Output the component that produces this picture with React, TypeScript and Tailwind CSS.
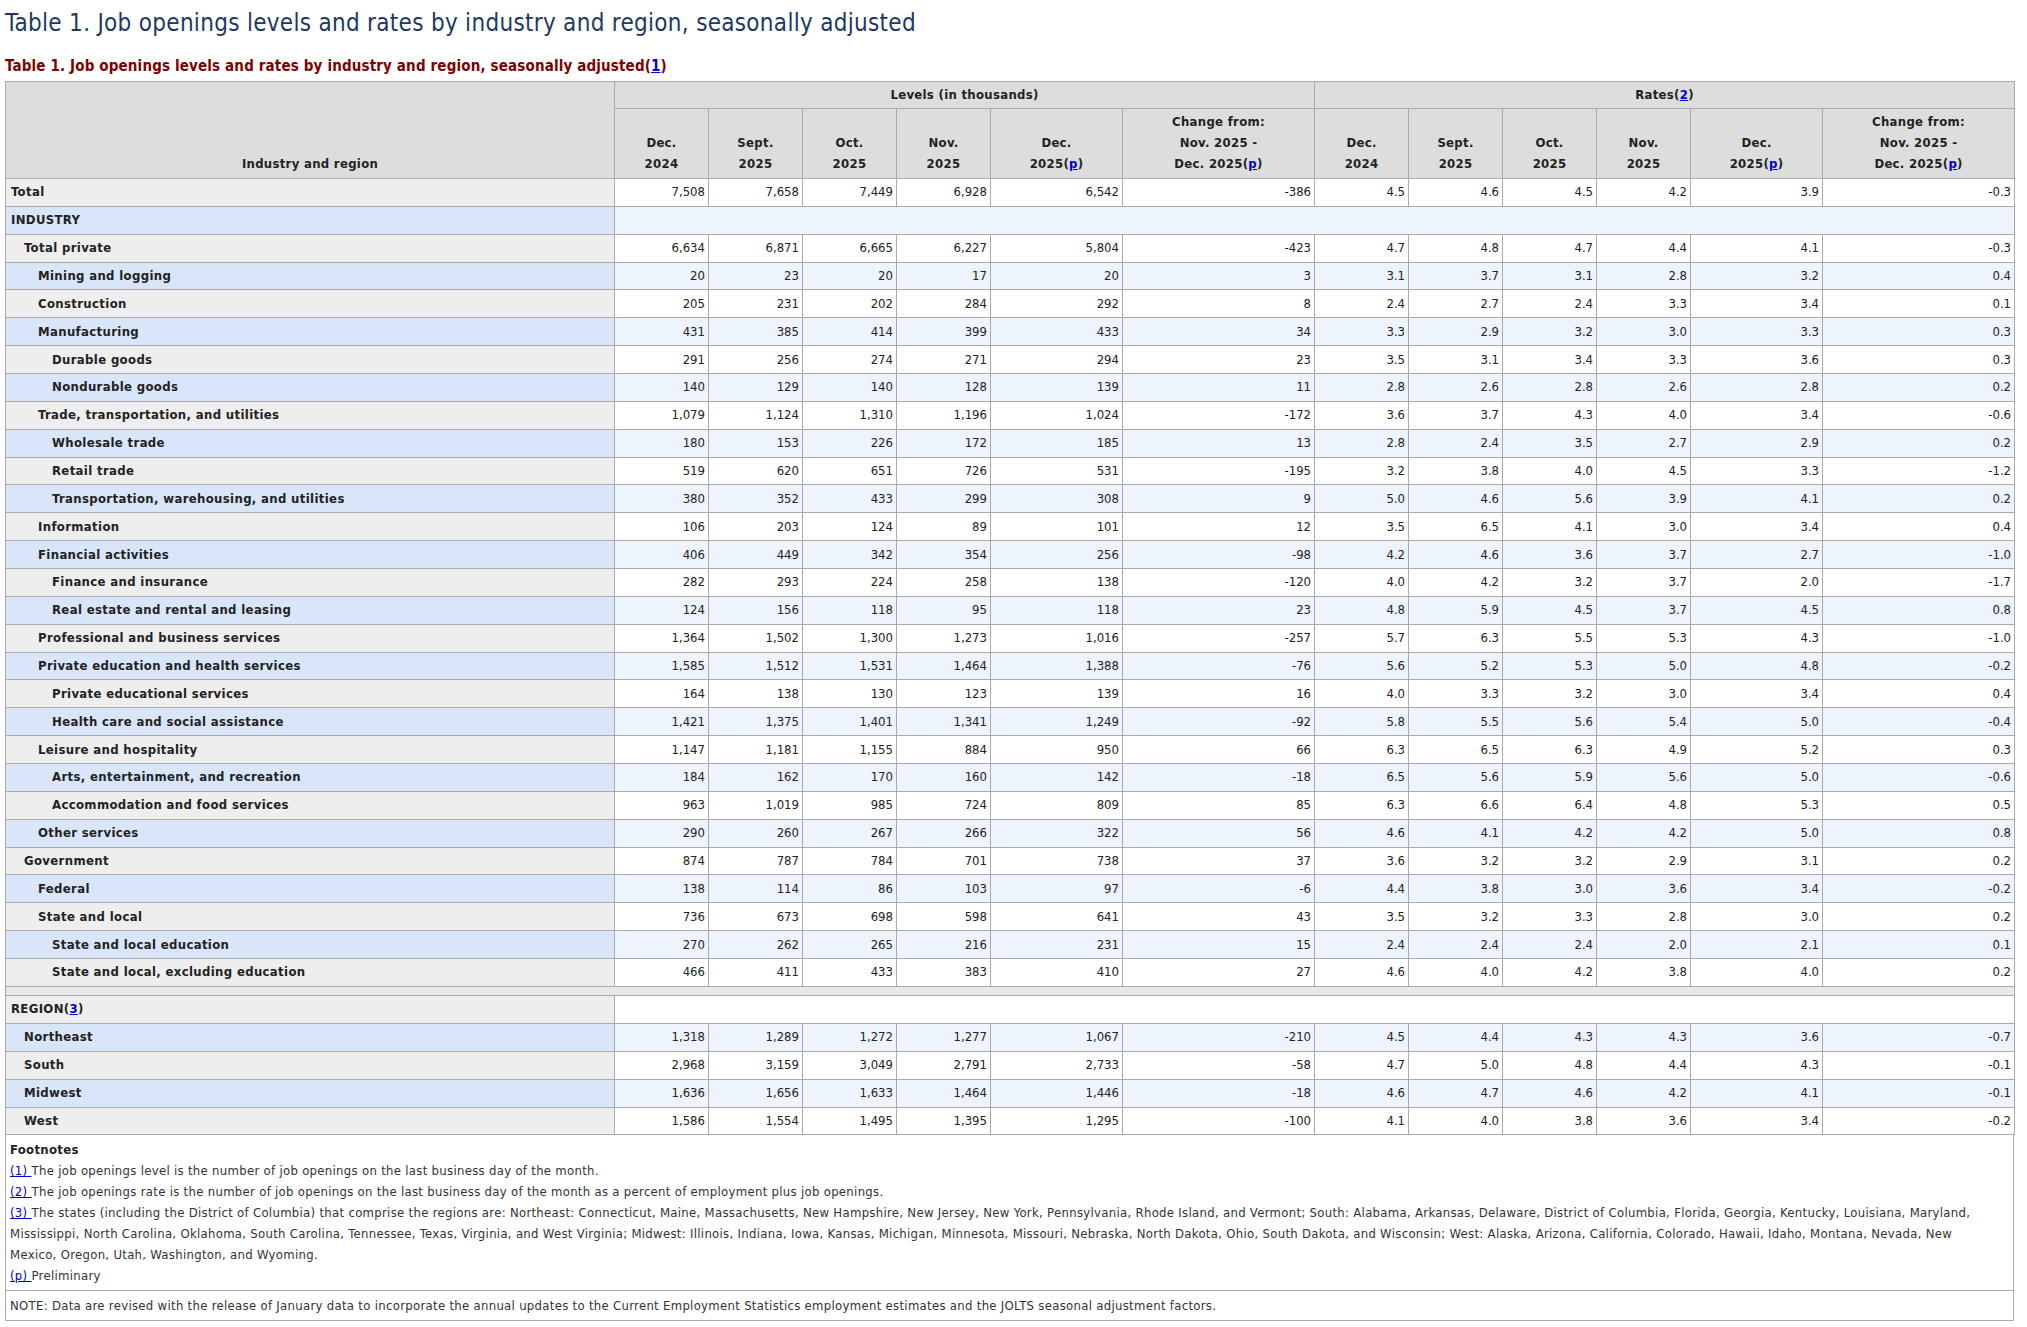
import React from "react";

type Row = { label: string; indent: number; v: string[] };

const industry: Row[] = [
  { label: "Total private", indent: 1, v: ["6,634", "6,871", "6,665", "6,227", "5,804", "-423", "4.7", "4.8", "4.7", "4.4", "4.1", "-0.3"] },
  { label: "Mining and logging", indent: 2, v: ["20", "23", "20", "17", "20", "3", "3.1", "3.7", "3.1", "2.8", "3.2", "0.4"] },
  { label: "Construction", indent: 2, v: ["205", "231", "202", "284", "292", "8", "2.4", "2.7", "2.4", "3.3", "3.4", "0.1"] },
  { label: "Manufacturing", indent: 2, v: ["431", "385", "414", "399", "433", "34", "3.3", "2.9", "3.2", "3.0", "3.3", "0.3"] },
  { label: "Durable goods", indent: 3, v: ["291", "256", "274", "271", "294", "23", "3.5", "3.1", "3.4", "3.3", "3.6", "0.3"] },
  { label: "Nondurable goods", indent: 3, v: ["140", "129", "140", "128", "139", "11", "2.8", "2.6", "2.8", "2.6", "2.8", "0.2"] },
  { label: "Trade, transportation, and utilities", indent: 2, v: ["1,079", "1,124", "1,310", "1,196", "1,024", "-172", "3.6", "3.7", "4.3", "4.0", "3.4", "-0.6"] },
  { label: "Wholesale trade", indent: 3, v: ["180", "153", "226", "172", "185", "13", "2.8", "2.4", "3.5", "2.7", "2.9", "0.2"] },
  { label: "Retail trade", indent: 3, v: ["519", "620", "651", "726", "531", "-195", "3.2", "3.8", "4.0", "4.5", "3.3", "-1.2"] },
  { label: "Transportation, warehousing, and utilities", indent: 3, v: ["380", "352", "433", "299", "308", "9", "5.0", "4.6", "5.6", "3.9", "4.1", "0.2"] },
  { label: "Information", indent: 2, v: ["106", "203", "124", "89", "101", "12", "3.5", "6.5", "4.1", "3.0", "3.4", "0.4"] },
  { label: "Financial activities", indent: 2, v: ["406", "449", "342", "354", "256", "-98", "4.2", "4.6", "3.6", "3.7", "2.7", "-1.0"] },
  { label: "Finance and insurance", indent: 3, v: ["282", "293", "224", "258", "138", "-120", "4.0", "4.2", "3.2", "3.7", "2.0", "-1.7"] },
  { label: "Real estate and rental and leasing", indent: 3, v: ["124", "156", "118", "95", "118", "23", "4.8", "5.9", "4.5", "3.7", "4.5", "0.8"] },
  { label: "Professional and business services", indent: 2, v: ["1,364", "1,502", "1,300", "1,273", "1,016", "-257", "5.7", "6.3", "5.5", "5.3", "4.3", "-1.0"] },
  { label: "Private education and health services", indent: 2, v: ["1,585", "1,512", "1,531", "1,464", "1,388", "-76", "5.6", "5.2", "5.3", "5.0", "4.8", "-0.2"] },
  { label: "Private educational services", indent: 3, v: ["164", "138", "130", "123", "139", "16", "4.0", "3.3", "3.2", "3.0", "3.4", "0.4"] },
  { label: "Health care and social assistance", indent: 3, v: ["1,421", "1,375", "1,401", "1,341", "1,249", "-92", "5.8", "5.5", "5.6", "5.4", "5.0", "-0.4"] },
  { label: "Leisure and hospitality", indent: 2, v: ["1,147", "1,181", "1,155", "884", "950", "66", "6.3", "6.5", "6.3", "4.9", "5.2", "0.3"] },
  { label: "Arts, entertainment, and recreation", indent: 3, v: ["184", "162", "170", "160", "142", "-18", "6.5", "5.6", "5.9", "5.6", "5.0", "-0.6"] },
  { label: "Accommodation and food services", indent: 3, v: ["963", "1,019", "985", "724", "809", "85", "6.3", "6.6", "6.4", "4.8", "5.3", "0.5"] },
  { label: "Other services", indent: 2, v: ["290", "260", "267", "266", "322", "56", "4.6", "4.1", "4.2", "4.2", "5.0", "0.8"] },
  { label: "Government", indent: 1, v: ["874", "787", "784", "701", "738", "37", "3.6", "3.2", "3.2", "2.9", "3.1", "0.2"] },
  { label: "Federal", indent: 2, v: ["138", "114", "86", "103", "97", "-6", "4.4", "3.8", "3.0", "3.6", "3.4", "-0.2"] },
  { label: "State and local", indent: 2, v: ["736", "673", "698", "598", "641", "43", "3.5", "3.2", "3.3", "2.8", "3.0", "0.2"] },
  { label: "State and local education", indent: 3, v: ["270", "262", "265", "216", "231", "15", "2.4", "2.4", "2.4", "2.0", "2.1", "0.1"] },
  { label: "State and local, excluding education", indent: 3, v: ["466", "411", "433", "383", "410", "27", "4.6", "4.0", "4.2", "3.8", "4.0", "0.2"] },
];

const regions: Row[] = [
  { label: "Northeast", indent: 1, v: ["1,318", "1,289", "1,272", "1,277", "1,067", "-210", "4.5", "4.4", "4.3", "4.3", "3.6", "-0.7"] },
  { label: "South", indent: 1, v: ["2,968", "3,159", "3,049", "2,791", "2,733", "-58", "4.7", "5.0", "4.8", "4.4", "4.3", "-0.1"] },
  { label: "Midwest", indent: 1, v: ["1,636", "1,656", "1,633", "1,464", "1,446", "-18", "4.6", "4.7", "4.6", "4.2", "4.1", "-0.1"] },
  { label: "West", indent: 1, v: ["1,586", "1,554", "1,495", "1,395", "1,295", "-100", "4.1", "4.0", "3.8", "3.6", "3.4", "-0.2"] },
];

const totalRow: Row = { label: "Total", indent: 0, v: ["7,508", "7,658", "7,449", "6,928", "6,542", "-386", "4.5", "4.6", "4.5", "4.2", "3.9", "-0.3"] };

const indentCls = ["pl-[5px]", "pl-[18px]", "pl-[32px]", "pl-[46px]"];

const Lnk = ({ children }: { children: React.ReactNode }) => (
  <span className="text-[#0000cc] underline">{children}</span>
);

function DataRow({ row, blue }: { row: Row; blue: boolean }) {
  return (
    <tr className="h-[27.86px]">
      <th
        className={`border border-[#aaaaaa] text-left font-bold tracking-[0.35px] ${indentCls[row.indent]} ${
          blue ? "bg-[#d9e6fa]" : "bg-[#eeeeee]"
        }`}
      >
        {row.label}
      </th>
      {row.v.map((x, i) => (
        <td
          key={i}
          className={`border border-[#aaaaaa] pr-[3px] text-right ${blue ? "bg-[#eef4fd]" : "bg-white"}`}
        >
          {x}
        </td>
      ))}
    </tr>
  );
}

const hdr =
  "border border-[#aaaaaa] bg-[#dddddd] font-bold tracking-[0.3px] text-center align-bottom pb-[4px] leading-[21px]";

function SubHeads() {
  return (
    <>
      <th className={hdr}>
        Dec.
        <br />
        2024
      </th>
      <th className={hdr}>
        Sept.
        <br />
        2025
      </th>
      <th className={hdr}>
        Oct.
        <br />
        2025
      </th>
      <th className={hdr}>
        Nov.
        <br />
        2025
      </th>
      <th className={hdr}>
        Dec.
        <br />
        2025(<Lnk>p</Lnk>)
      </th>
      <th className={hdr}>
        Change from:
        <br />
        Nov. 2025 -
        <br />
        Dec. 2025(<Lnk>p</Lnk>)
      </th>
    </>
  );
}

export default function App() {
  return (
    <div className="min-h-screen bg-white px-[5px] font-['DejaVu_Sans_Condensed','DejaVu_Sans',sans-serif] font-stretch-condensed text-[#222222]">
      <h1 className="pt-[8px] text-[24px] leading-[30px] font-normal tracking-[0.3px] text-[#203864]">
        Table 1. Job openings levels and rates by industry and region, seasonally adjusted
      </h1>
      <div className="mt-[18px] mb-[5px] text-[15px] leading-[20px] font-bold tracking-[0.15px] text-[#800000]">
        Table 1. Job openings levels and rates by industry and region, seasonally adjusted(<Lnk>1</Lnk>)
      </div>
      <table className="w-[2009px] table-fixed border-collapse text-[13px] leading-[20px] text-[#222222]">
        <colgroup>
          <col className="w-[609px]" />
          <col className="w-[94px]" />
          <col className="w-[94px]" />
          <col className="w-[94px]" />
          <col className="w-[94px]" />
          <col className="w-[132px]" />
          <col className="w-[192px]" />
          <col className="w-[94px]" />
          <col className="w-[94px]" />
          <col className="w-[94px]" />
          <col className="w-[94px]" />
          <col className="w-[132px]" />
          <col className="w-[192px]" />
        </colgroup>
        <thead>
          <tr className="h-[27px]">
            <th rowSpan={2} className={hdr}>
              Industry and region
            </th>
            <th
              colSpan={6}
              className="border border-[#aaaaaa] bg-[#dddddd] text-center font-bold tracking-[0.3px] align-middle"
            >
              Levels (in thousands)
            </th>
            <th
              colSpan={6}
              className="border border-[#aaaaaa] bg-[#dddddd] text-center font-bold tracking-[0.3px] align-middle"
            >
              Rates(<Lnk>2</Lnk>)
            </th>
          </tr>
          <tr className="h-[70px]">
            <SubHeads />
            <SubHeads />
          </tr>
        </thead>
        <tbody>
          <DataRow row={totalRow} blue={false} />
          <tr className="h-[27.86px]">
            <th className="border border-[#aaaaaa] bg-[#d9e6fa] pl-[5px] text-left font-bold tracking-[0.35px]">
              INDUSTRY
            </th>
            <td colSpan={12} className="border border-[#aaaaaa] bg-[#eef4fd]"></td>
          </tr>
          {industry.map((r, i) => (
            <DataRow key={r.label} row={r} blue={i % 2 === 1} />
          ))}
          <tr className="h-[9px]">
            <td colSpan={13} className="border border-[#aaaaaa] bg-[#e8e8e8] p-0"></td>
          </tr>
          <tr className="h-[28px]">
            <th className="border border-[#aaaaaa] bg-[#eeeeee] pl-[5px] text-left font-bold tracking-[0.35px]">
              REGION(<Lnk>3</Lnk>)
            </th>
            <td colSpan={12} className="border border-[#aaaaaa] bg-white"></td>
          </tr>
          {regions.map((r, i) => (
            <DataRow key={r.label} row={r} blue={i % 2 === 0} />
          ))}
        </tbody>
      </table>
      <div className="w-[2009px] border-x border-b border-[#aaaaaa] text-[13px] leading-[21px] tracking-[0.3px] text-[#333333]">
        <div className="px-[4px] pt-[4px] pb-[4px]">
          <div className="font-bold text-[#222222]">Footnotes</div>
          <div>
            <Lnk>(1) </Lnk>The job openings level is the number of job openings on the last business day of the month.
          </div>
          <div>
            <Lnk>(2) </Lnk>The job openings rate is the number of job openings on the last business day of the month as a
            percent of employment plus job openings.
          </div>
          <div className="whitespace-nowrap">
            <Lnk>(3) </Lnk>The states (including the District of Columbia) that comprise the regions are: Northeast:
            Connecticut, Maine, Massachusetts, New Hampshire, New Jersey, New York, Pennsylvania, Rhode Island, and
            Vermont; South: Alabama, Arkansas, Delaware, District of Columbia, Florida, Georgia, Kentucky, Louisiana,
            Maryland,
          </div>
          <div className="whitespace-nowrap">
            Mississippi, North Carolina, Oklahoma, South Carolina, Tennessee, Texas, Virginia, and West Virginia; Midwest:
            Illinois, Indiana, Iowa, Kansas, Michigan, Minnesota, Missouri, Nebraska, North Dakota, Ohio, South Dakota,
            and Wisconsin; West: Alaska, Arizona, California, Colorado, Hawaii, Idaho, Montana, Nevada, New
          </div>
          <div className="whitespace-nowrap">Mexico, Oregon, Utah, Washington, and Wyoming.</div>
          <div>
            <Lnk>(p) </Lnk>Preliminary
          </div>
        </div>
        <div className="border-t border-[#aaaaaa] px-[4px] pt-[4px] pb-[4px]">
          NOTE: Data are revised with the release of January data to incorporate the annual updates to the Current
          Employment Statistics employment estimates and the JOLTS seasonal adjustment factors.
        </div>
      </div>
    </div>
  );
}
